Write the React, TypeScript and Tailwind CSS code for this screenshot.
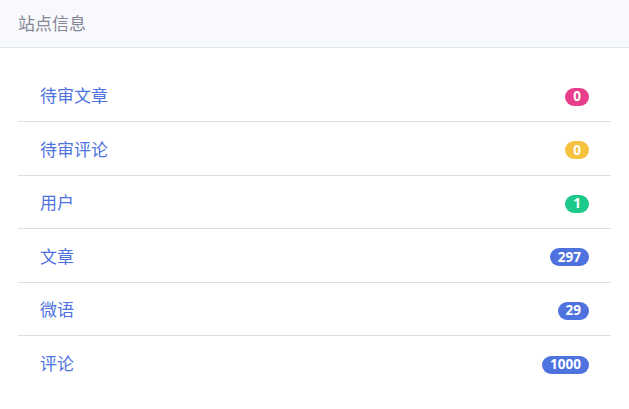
import React from 'react';

// Site stats card
const rows = [
  { label: '待审文章', count: 0, color: 'bg-[#e83e8c]' },
  { label: '待审评论', count: 0, color: 'bg-[#f6c23e]' },
  { label: '用户', count: 1, color: 'bg-[#1cc88a]' },
  { label: '文章', count: 297, color: 'bg-[#4e73df]' },
  { label: '微语', count: 29, color: 'bg-[#4e73df]' },
  { label: '评论', count: 1000, color: 'bg-[#4e73df]' },
];

export default function App() {
  return (
    <div className="w-[629px] h-[409px] bg-white overflow-hidden" style={{ fontFamily: '"Open Sans", "Noto Sans CJK SC", sans-serif' }}>
      <div className="h-[48px] px-[18px] flex items-center bg-[#f8f9fc] border-b border-[#e3e6f0]">
        <h6 className="text-[17px] text-[#858796]">站点信息</h6>
      </div>

      <div className="px-[18px] pt-[20px]">
        <ul className="divide-y divide-[#dedede]">
          {rows.map((r, i) => (
            <li
              key={r.label}
              className={`flex items-center justify-between pl-[22px] pr-[22px] ${i === 0 ? 'h-[54px]' : 'h-[53.5px]'}`}
            >
              <span className="mt-[2px] text-[17px] text-[#4e73df]">{r.label}</span>
              <span className={`mt-1 h-[18px] px-2 rounded-full flex items-center text-white text-[13.5px] font-bold leading-none ${r.color}`}>
                {r.count}
              </span>
            </li>
          ))}
        </ul>
      </div>
    </div>
  );
}
